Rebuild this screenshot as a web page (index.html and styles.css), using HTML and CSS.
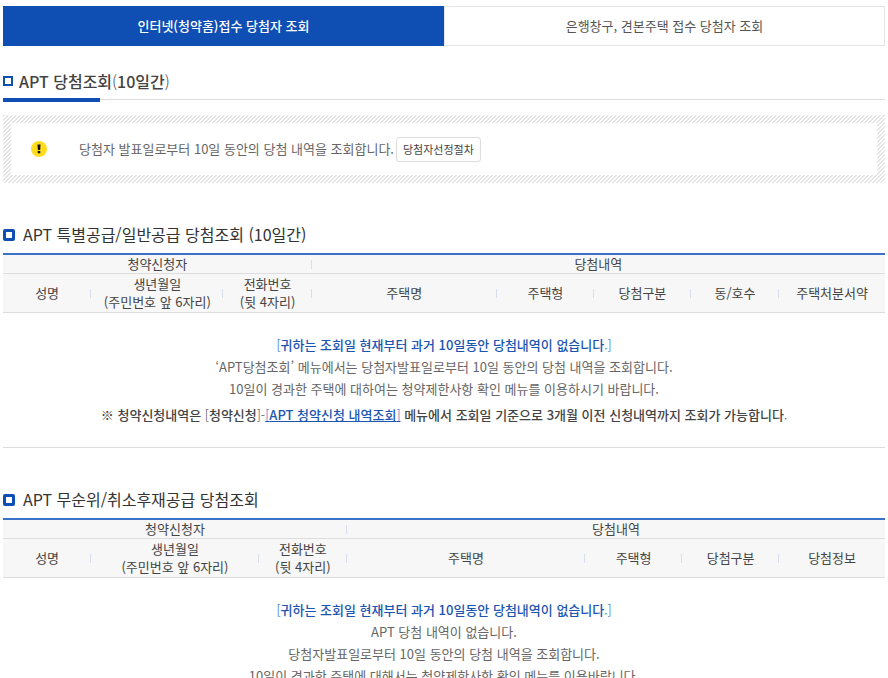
FILE: index.html
```html
<!DOCTYPE html>
<html lang="ko">
<head>
  <meta charset="UTF-8">
  <meta name="viewport" content="width=device-width, initial-scale=1.0">
  <title>APT 당첨조회</title>
  <link rel="stylesheet" href="styles.css">
</head>
<body>
  <nav class="tabs">
    <a href="#internet" class="tab on">인터넷(청약홈)접수 당첨자 조회</a>
    <a href="#bank" class="tab">은행창구, 견본주택 접수 당첨자 조회</a>
  </nav>

  <h1 class="page-title"><span>APT 당첨조회<span class="thin">(</span>10일간<span class="thin">)</span></span></h1>

  <div class="notice">
    <div class="notice-inner">
      <svg class="notice-icon" viewBox="0 0 16 16" aria-hidden="true">
        <circle cx="8" cy="8" r="8" fill="#ffdc1e"/>
        <path d="M6.5 3.5h3l-.3 5.5H6.8zM6.7 10h2.6v2.3H6.7z" fill="#111"/>
      </svg>
      <p>당첨자 발표일로부터 10일 동안의 당첨 내역을 조회합니다.</p>
      <button type="button" class="btn">당첨자선정절차</button>
    </div>
  </div>

  <h2 class="sub-title">APT 특별공급/일반공급 당첨조회 (10일간)</h2>
  <table class="list">
    <colgroup>
      <col class="w10"><col class="w15"><col class="w10"><col class="w21">
      <col class="w11"><col class="w11"><col class="w10"><col class="w12">
    </colgroup>
    <thead>
      <tr>
        <th colspan="3">청약신청자</th>
        <th colspan="5">당첨내역</th>
      </tr>
      <tr>
        <th>성명</th>
        <th>생년월일<br>(주민번호 앞 6자리)</th>
        <th>전화번호<br>(뒷 4자리)</th>
        <th>주택명</th>
        <th>주택형</th>
        <th>당첨구분</th>
        <th>동/호수</th>
        <th>주택처분서약</th>
      </tr>
    </thead>
    <tbody>
      <tr>
        <td colspan="8">
          <p class="point"><span class="thin">[</span>귀하는 조회일 현재부터 과거 10일동안 당첨내역이 없습니다<span class="thin">.]</span></p>
          <p>‘APT당첨조회’ 메뉴에서는 당첨자발표일로부터 10일 동안의 당첨 내역을 조회합니다.</p>
          <p>10일이 경과한 주택에 대하여는 청약제한사항 확인 메뉴를 이용하시기 바랍니다.</p>
          <p class="guide">※ 청약신청내역은 <span class="thin">[</span>청약신청<span class="thin">]-</span><a href="#history"><span class="thin">[</span>APT 청약신청 내역조회<span class="thin">]</span></a> 메뉴에서 조회일 기준으로 3개월 이전 신청내역까지 조회가 가능합니다<span class="thin">.</span></p>
        </td>
      </tr>
    </tbody>
  </table>

  <h2 class="sub-title">APT 무순위/취소후재공급 당첨조회</h2>
  <table class="list">
    <colgroup>
      <col class="w10"><col class="w19"><col class="w10"><col class="w27">
      <col class="w11"><col class="w11"><col class="w12">
    </colgroup>
    <thead>
      <tr>
        <th colspan="3">청약신청자</th>
        <th colspan="4">당첨내역</th>
      </tr>
      <tr>
        <th>성명</th>
        <th>생년월일<br>(주민번호 앞 6자리)</th>
        <th>전화번호<br>(뒷 4자리)</th>
        <th>주택명</th>
        <th>주택형</th>
        <th>당첨구분</th>
        <th>당첨정보</th>
      </tr>
    </thead>
    <tbody>
      <tr>
        <td colspan="7">
          <p class="point"><span class="thin">[</span>귀하는 조회일 현재부터 과거 10일동안 당첨내역이 없습니다<span class="thin">.]</span></p>
          <p>APT 당첨 내역이 없습니다.</p>
          <p>당첨자발표일로부터 10일 동안의 당첨 내역을 조회합니다.</p>
          <p>10일이 경과한 주택에 대해서는 청약제한사항 확인 메뉴를 이용바랍니다.</p>
        </td>
      </tr>
    </tbody>
  </table>
</body>
</html>
```
FILE: styles.css
```css
*,
*::before,
*::after {
  box-sizing: border-box;
}
html {
  scrollbar-width: none;
}
body {
  margin: 0;
  padding: 6px 3px 0;
  font-family: "Noto Sans CJK KR", "Noto Sans", sans-serif;
  font-size: 13px;
  line-height: 18px;
  color: #444;
  background-color: #fff;
}
p {
  margin: 0;
}
.thin {
  font-weight: 300;
}

/* tabs */
.tabs {
  display: flex;
}
.tab {
  flex: 1;
  height: 40px;
  line-height: 38px;
  border: 1px solid #e5e5e5;
  text-align: center;
  color: #555;
  text-decoration: none;
}
.tab.on {
  border-color: #0f4eb3;
  background-color: #0f4eb3;
  color: #fff;
  font-weight: 500;
}

/* titles */
.page-title {
  display: flex;
  align-items: center;
  position: relative;
  margin: 21px 0 15px;
  padding-bottom: 4px;
  height: 33px;
  border-bottom: 1px solid #ddd;
  font-size: 16px;
  font-weight: 500;
  color: #444;
}
.page-title::before {
  content: "";
  width: 10px;
  height: 10px;
  margin-right: 6px;
  border: 2px solid #0f4eb3;
}
.page-title::after {
  content: "";
  position: absolute;
  left: 0;
  bottom: -3px;
  width: 11%;
  height: 4px;
  background-color: #0f4eb3;
}
.sub-title {
  display: flex;
  align-items: center;
  margin: 40px 0 7px;
  font-size: 16px;
  line-height: 23px;
  font-weight: 400;
  color: #333;
}
.sub-title::before {
  content: "";
  width: 12px;
  height: 12px;
  margin-right: 8px;
  border: 3px solid #0f4eb3;
  border-radius: 2px;
}

/* notice box */
.notice {
  padding: 8px;
  background: linear-gradient(135deg, #e4e4e4 25%, #fff 25%, #fff 50%, #e4e4e4 50%, #e4e4e4 75%, #fff 75%) 0 0 / 4px 4px;
}
.notice-inner {
  display: flex;
  align-items: center;
  height: 52px;
  padding: 0 20px;
  background-color: #fff;
  color: #666;
}
.notice-icon {
  width: 16px;
  height: 16px;
  margin-right: 32px;
}
.btn {
  height: 25px;
  margin-left: 2px;
  padding: 0 6px;
  border: 1px solid #ddd;
  border-radius: 3px;
  background-color: #fff;
  font-family: inherit;
  font-size: 11px;
  color: #444;
  cursor: pointer;
}

/* result tables */
.list {
  width: 100%;
  table-layout: fixed;
  border-collapse: separate;
  border-spacing: 0;
  border-top: 2px solid #3a72c8;
}
.list th {
  padding: 0;
  height: 19px;
  border-bottom: 1px solid #ddd;
  font-weight: 400;
  background: #f7f7f7 linear-gradient(#d5dfee, #d5dfee) right center / 1px 9px no-repeat;
}
.list tr + tr th {
  height: 39px;
}
.list th:last-child {
  background-image: none;
}
.list td {
  padding: 21px 0;
  border-bottom: 1px solid #ddd;
  text-align: center;
  line-height: 22px;
  color: #666;
}
.list .point {
  color: #1c55b0;
  font-weight: 500;
}
.list .guide {
  margin-top: 4px;
  color: #444;
  font-weight: 500;
}
.guide a {
  color: #1c55b0;
}
.w10 { width: 10%; }
.w11 { width: 11%; }
.w12 { width: 12%; }
.w15 { width: 15%; }
.w19 { width: 19%; }
.w21 { width: 21%; }
.w27 { width: 27%; }
```
